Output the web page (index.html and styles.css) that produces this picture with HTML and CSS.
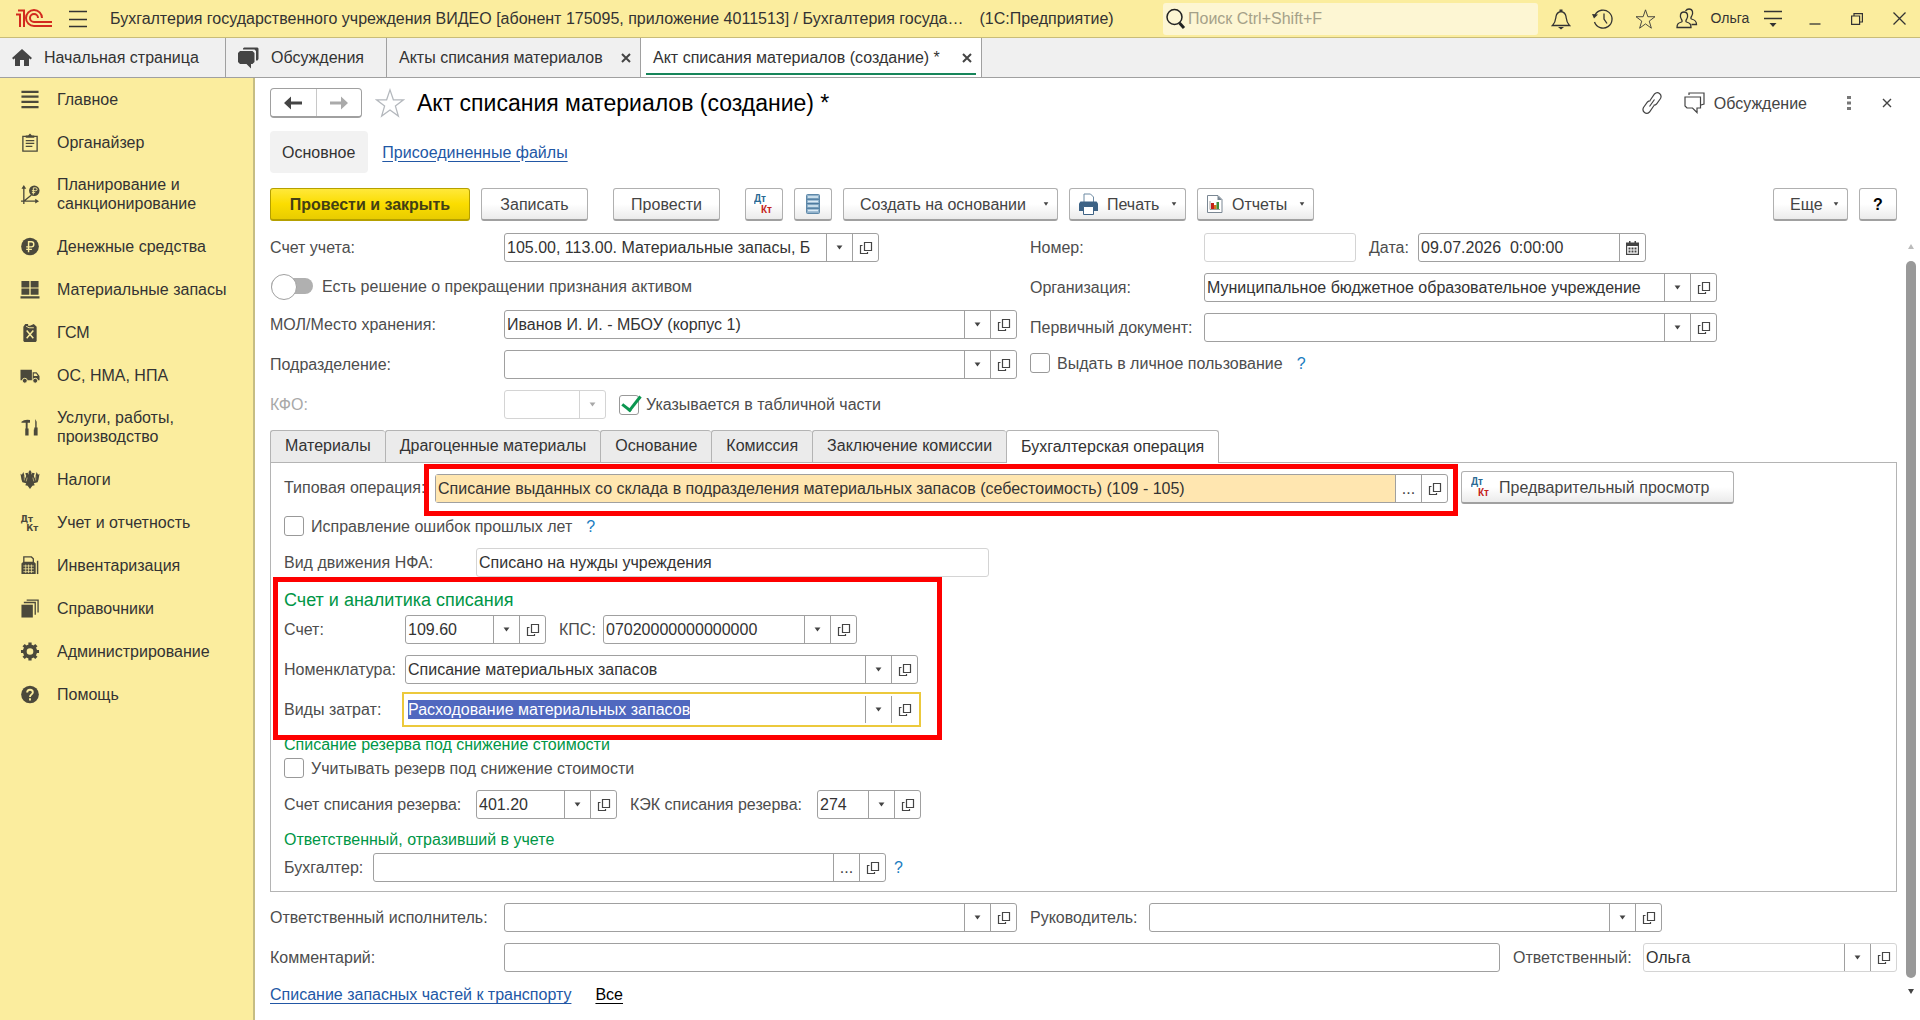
FILE: index.html
```html
<!DOCTYPE html>
<html lang="ru">
<head>
    <meta charset="UTF-8">
    <meta name="viewport" content="width=device-width, initial-scale=1.0">
    <title>Акт списания материалов (создание) *</title>
    <link rel="stylesheet" href="styles.css">
</head>
<body>
    <!-- Общие значки -->
    <svg class="sprite" aria-hidden="true">
        <symbol id="i-down" viewBox="0 0 8 6"><path d="M0.5 0.5h7L4 5.5z" fill="currentColor"/></symbol>
        <symbol id="i-open" viewBox="0 0 14 14"><path d="M5.5 1.5h7v8h-7zM3.500 4.500h-2v8h7v-1.500" fill="none" stroke="currentColor" stroke-width="1.200"/></symbol>
        <symbol id="i-close" viewBox="0 0 10 10"><path d="M1 1l8 8M9 1l-8 8" stroke="currentColor" stroke-width="2" fill="none"/></symbol>
        <symbol id="i-star" viewBox="0 0 24 24"><path d="M12 1.500l2.700 7.900h8.100l-6.500 5 2.400 8.100-6.700-4.900-6.700 4.900 2.400-8.100-6.500-5h8.100z" fill="none" stroke="currentColor"/></symbol>
    </svg>

    <header class="titlebar">
        <svg class="logo" viewBox="0 0 38 20" aria-label="1С"><g fill="none" stroke="#d22a1e" stroke-width="2"><path d="M1 5.500h4V18M3 1.500h6V18"/><path d="M27 9a8 8 0 1 0-8 8h18M23 9a4 4 0 1 0-4 4h18"/></g></svg>
        <button class="burger" aria-label="Меню"><svg width="18" height="18" viewBox="0 0 18 18"><path d="M0 1.500h18M0 9.500h18M0 16.500h18" stroke="currentColor" stroke-width="1.300"/></svg></button>
        <div class="app-title">
            <span>Бухгалтерия государственного учреждения ВИДЕО [абонент 175095, приложение 4011513] / Бухгалтерия госуда…</span>
            <span>(1С:Предприятие)</span>
        </div>
        <div class="search">
            <svg width="20" height="22" viewBox="0 0 20 22"><circle cx="8.500" cy="9" r="7.500" fill="none" stroke="#222" stroke-width="1.500"/><path d="M13.500 15l4.500 5" stroke="#222" stroke-width="3"/></svg>
            <input type="search" placeholder="Поиск Ctrl+Shift+F" aria-label="Поиск">
        </div>
        <button class="tool" aria-label="Уведомления"><svg width="20" height="22" viewBox="0 0 20 22"><path d="M1.500 17.500c3-3 3-5 3.500-9 .5-3 2-4.500 5-5 3 .5 4.500 2 5 5 .5 4 .5 6 3.500 9z" fill="none" stroke="currentColor" stroke-width="1.300"/><path d="M8.500 3.500V1.500h3v2M7 19h6l-3 2.500z" fill="currentColor"/></svg></button>
        <button class="tool" aria-label="История"><svg width="22" height="22" viewBox="0 0 22 22"><path d="M3 7a9 9 0 1 1-.5 7M12 5.500V11l3 4.500" fill="none" stroke="currentColor" stroke-width="1.300"/><path d="M0 6l6 .5-4 4z" fill="currentColor"/></svg></button>
        <button class="tool" aria-label="Избранное"><svg width="21" height="22"><use href="#i-star"/></svg></button>
        <button class="tool" aria-label="Пользователи"><svg width="22" height="22" viewBox="0 0 22 22"><g fill="none" stroke="currentColor" stroke-width="1.300"><path d="M1 19.500c0-3.500 1-4.500 4.500-5.500.8-.5.8-1.500 0-2.500-2-3-1.500-7.500 2.500-7.500s4.500 4.500 2.500 7.500c-.8 1-.8 2 0 2.500 3.500 1 4.500 2 4.500 5.500z"/><path d="M9.500 3c1-1.500 2.500-2 3.500-2 4 0 4.500 4.500 2.500 7.500-.8 1-.8 2 0 2.500 3.500 1 5 2 5 5.500h-5"/></g></svg></button>
        <span class="user">Ольга</span>
        <button class="tool" aria-label="Настройки"><svg width="18" height="18" viewBox="0 0 18 18"><path d="M0 1.500h18M0 8.500h18" stroke="currentColor" stroke-width="1.300"/><path d="M5.500 13h7L9 17z" fill="currentColor"/></svg></button>
        <button class="tool" aria-label="Свернуть"><svg width="12" height="12" viewBox="0 0 12 12"><path d="M0.500 11h11" stroke="currentColor" stroke-width="1.300"/></svg></button>
        <button class="tool" aria-label="Развернуть"><svg width="12" height="12" viewBox="0 0 12 12"><path d="M.6 3h8v8.400h-8zM3 3V.6h8.400V9H9" fill="none" stroke="currentColor" stroke-width="1.200"/></svg></button>
        <button class="tool" aria-label="Закрыть"><svg width="13" height="13" viewBox="0 0 13 13"><path d="M.5.5l12 12M12.500.5l-12 12" stroke="currentColor" stroke-width="1.300"/></svg></button>
    </header>

    <nav class="windows">
        <a class="window home" href="#"><svg width="20" height="18" viewBox="0 0 20 18"><path d="M10 0L0 9l1.500 1.500L3 9.300V17h5v-6h4v6h5V9.300l1.500 1.200L20 9z" fill="#444"/></svg>Начальная страница</a>
        <a class="window talks" href="#"><svg width="21" height="22" viewBox="0 0 21 22"><path d="M5 2.500V1.500l1-1h13.500l1 1V12l-1 1.500h-1.500V4l-1.500-1.500z" fill="#444"/><path d="M2 4h12.500l2 2v9l-2 2H13v4.500L8.500 17H2l-2-2V6z" fill="#444"/></svg>Обсуждения</a>
        <a class="window list" href="#">Акты списания материалов<svg class="x" width="10" height="10"><use href="#i-close"/></svg></a>
        <a class="window active" href="#">Акт списания материалов (создание) *<svg class="x" width="10" height="10"><use href="#i-close"/></svg></a>
    </nav>

    <div class="layout">
        <aside class="sidebar">
            <a href="#"><svg viewBox="0 0 20 20"><path d="M1 2h18M1 7h18M1 12.500h18M1 18h18" stroke="currentColor" stroke-width="2.400"/></svg>Главное</a>
            <a href="#"><svg viewBox="0 0 20 20"><path d="M2.500 3.500h15v15.500h-15z" fill="none" stroke="currentColor" stroke-width="1.400"/><path d="M5.500 5V2.500h2.500L10 .5l2 2h2.500V5z" fill="currentColor"/><path d="M5.500 8h9M5.500 11h9M5.500 14h7" stroke="currentColor" stroke-width="1.400"/></svg>Органайзер</a>
            <a href="#"><svg viewBox="0 0 20 20"><path d="M3.500 3v14h13M3.500 17l8-6.500M.5 17h3v3" fill="none" stroke="currentColor" stroke-width="1.400"/><path d="M3.500 0L6 4H1zM19.500 17l-4-2.500v5z" fill="currentColor"/><circle cx="14.500" cy="6" r="5.500" fill="currentColor"/><path d="M13.500 10V3h2.500q1.500 0 1.500 1.500T16 6h-4M12 8h3.500" fill="none" stroke="#fbed9e"/></svg>Планирование и санкционирование</a>
            <a href="#"><svg viewBox="0 0 20 20"><circle cx="10" cy="10" r="9.300" fill="currentColor"/><path d="M8.500 16V5h3q2.500 0 2.500 2.700t-2.500 2.700H6M6 13h6" fill="none" stroke="#fbed9e" stroke-width="1.500"/></svg>Денежные средства</a>
            <a href="#"><svg viewBox="0 0 20 20"><path d="M1 1h8.300v6.800H1zM10.700 1H19v6.800h-8.300zM1 9h8.300v6.500H1zM10.700 9H19v6.500h-8.300zM0 17h20v2.500H0z" fill="currentColor"/></svg>Материальные запасы</a>
            <a href="#"><svg viewBox="0 0 20 20"><path d="M3 4l2-3h3v2h2l4-2 3 3v15l-1 1H4l-1-1z" fill="currentColor"/><path d="M6.500 8l7 8M13.500 8l-7 8" stroke="#fbed9e" stroke-width="1.600"/><path d="M6 3.500l3 1.500h5" stroke="#fbed9e" fill="none"/></svg>ГСМ</a>
            <a href="#"><svg viewBox="0 0 20 20"><path d="M0 4h12v11H0zM12.800 6.500H17l3 4V15h-7.200z" fill="currentColor"/><path d="M14 8h2.500l1.700 2.500H14z" fill="#fbed9e"/><g fill="currentColor" stroke="#fbed9e"><circle cx="4.500" cy="15.500" r="2.600"/><circle cx="15.500" cy="15.500" r="2.600"/></g></svg>ОС, НМА, НПА</a>
            <a href="#"><svg viewBox="0 0 20 20"><path d="M1 4q3-3 9-2v3H7.500v6h-2V5H1zM5 11h3.500v7.500H5zM15.500 1l1.500 3v6h1v2h-3.500v-2h1V4zM14 12h4v6.500h-4z" fill="currentColor"/></svg>Услуги, работы, производство</a>
            <a href="#"><svg viewBox="0 0 20 20"><path d="M10 0l1.500 2v3l1-2 2.500.5-1 2.500 1 3L17 2l1.500 3L20 4l-1 6-1 3-4 1 1 2-2.500.5L10 20l-2.500-3.500L5 16l1-2-4-1-1-3-1-6 1.500 1L3 2l2 7 1-3-1-2.500L7.500 3l1 2V2z" fill="currentColor"/><path d="M4 6v5M16 6v5M7 8l-1 4M13 8l1 4" stroke="#fbed9e" stroke-width=".6"/></svg>Налоги</a>
            <a href="#"><svg viewBox="0 0 20 20" class="glyph"><text x="0" y="9" font-size="9">Дт</text><text x="6" y="19" font-size="9">Кт</text></svg>Учет и отчетность</a>
            <a href="#"><svg viewBox="0 0 20 20"><path d="M3.500 8V1h8l2 2v5" fill="none" stroke="currentColor" stroke-width="1.400"/><path d="M1 8l2-2h11l2 2v11H1z" fill="currentColor"/><path d="M3 10.500h11M3 13.500h11M3 16.500h11M5.500 9v9M8.500 9v9M11.500 9v9" stroke="#fbed9e" stroke-width=".8"/><path d="M18 5v14" stroke="currentColor" stroke-width="1.500"/></svg>Инвентаризация</a>
            <a href="#"><svg viewBox="0 0 20 20"><path d="M1 6h12v13.500H1z" fill="currentColor"/><path d="M3.500 3.700h12v13M6.500 1.200h12v13" fill="none" stroke="currentColor" stroke-width="1.400"/></svg>Справочники</a>
            <a href="#"><svg viewBox="0 0 20 20"><circle cx="10" cy="10" r="5.500" fill="none" stroke="currentColor" stroke-width="4"/><path d="M10 .5v3M10 16.500v3M.5 10h3M16.500 10h3M3.300 3.300l2.200 2.200M14.500 14.500l2.200 2.200M3.300 16.700l2.200-2.200M14.500 5.500l2.200-2.200" stroke="currentColor" stroke-width="3.400"/></svg>Администрирование</a>
            <a href="#"><svg viewBox="0 0 20 20"><circle cx="10" cy="10" r="9.300" fill="currentColor"/><path d="M7 8q0-3 3-3t3 2.700q0 1.300-1.500 2.300T10 12.500M10 14v2.200" fill="none" stroke="#fbed9e" stroke-width="2"/></svg>Помощь</a>
        </aside>

        <main class="page">
            <div class="page-head">
                <div class="history">
                    <button aria-label="Назад"><svg width="18" height="14" viewBox="0 0 18 14"><path d="M0 7l7-6.500V5.500h11v3H7v5z" fill="#444"/></svg></button>
                    <button aria-label="Вперед"><svg width="18" height="14" viewBox="0 0 18 14"><path d="M18 7l-7-6.500V5.500H0v3h11v5z" fill="#aaa"/></svg></button>
                </div>
                <svg class="favorite" width="30" height="30"><use href="#i-star"/></svg>
                <h1>Акт списания материалов (создание) *</h1>
                <button class="plain link-btn" aria-label="Ссылка"><svg width="20" height="24" viewBox="0 0 20 24"><path d="M8 9.500l4.500-6.500q2.500-2.500 5-.5t1 5L14.500 13q-1.500 1.500-3 1M12 14.500L7.500 21q-2.500 2.500-5 .5t-1-5L5.500 11q1.500-1.500 3-1M7.500 15.500l5-7" fill="none" stroke="currentColor" stroke-width="1.200"/></svg></button>
                <button class="plain talk-btn"><svg width="21" height="22" viewBox="0 0 21 22"><path d="M5 3V1h15v11l-3 1M1 5h15.500v11H13v4.500L8.500 16H3l-2-2z" fill="none" stroke="currentColor" stroke-width="1.200"/></svg>Обсуждение</button>
                <button class="plain dots" aria-label="Еще"><svg width="4" height="16" viewBox="0 0 4 16"><path d="M0 1h4v3H0zM0 6.500h4v3H0zM0 12h4v3H0z" fill="#777"/></svg></button>
                <button class="plain" aria-label="Закрыть"><svg width="10" height="10" viewBox="0 0 10 10"><path d="M1 1l8 8M9 1l-8 8" stroke="currentColor" stroke-width="1.400"/></svg></button>
            </div>

            <nav class="sections">
                <span class="current">Основное</span>
                <a href="#">Присоединенные файлы</a>
            </nav>

            <div class="commands">
                <button class="btn primary">Провести и закрыть</button>
                <button class="btn">Записать</button>
                <button class="btn spaced">Провести</button>
                <button class="btn icon spaced" aria-label="Проводки"><svg class="dtkt" width="20" height="22" viewBox="0 0 20 22"><text x="0" y="9">Дт</text><text class="kt" x="7" y="20">Кт</text></svg></button>
                <button class="btn icon" aria-label="Реестр"><svg width="14" height="20" viewBox="0 0 14 20"><rect x=".5" y=".5" width="13" height="19" rx="1" fill="#8fb1cb" stroke="#5e88a8"/><path d="M2 3h10M2 7.500h10M2 12h10M2 16.500h10" stroke="#dcebf5" stroke-width="1.500"/><path d="M1 5.200h12M1 9.700h12M1 14.200h12" stroke="#3f6f95"/></svg></button>
                <button class="btn menu create">Создать на основании<svg class="caret"><use href="#i-down"/></svg></button>
                <button class="btn menu with-icon"><svg width="19" height="22" viewBox="0 0 19 22"><path d="M5 9V1h6.500l3 3v5" fill="#fff" stroke="#6d8aa3"/><path d="M1.500 8.500h16l1.500 2V18H0v-7.500z" fill="#3d6285"/><path d="M4.500 13.500h10v8h-10z" fill="#fff" stroke="#3d6285"/></svg>Печать<svg class="caret"><use href="#i-down"/></svg></button>
                <button class="btn menu with-icon"><svg width="16" height="18" viewBox="0 0 16 18"><path d="M.5.5h10.500l4 4v13H.5z" fill="#fff" stroke="#7a8793"/><path d="M10.500.5v4.500h4.500z" fill="#7a8793"/><path d="M3 6v8.500h10" fill="none" stroke="#777" stroke-width=".7"/><path d="M4 8h3v6H4z" fill="#c4231a"/><path d="M7 10h2.500v4H7z" fill="#d67a1f"/><path d="M9.500 7H12v7H9.500z" fill="#3d8f3d"/></svg>Отчеты<svg class="caret"><use href="#i-down"/></svg></button>
                <button class="btn menu more">Еще<svg class="caret"><use href="#i-down"/></svg></button>
                <button class="btn icon help-btn">?</button>
            </div>

            <div class="work">
                <form class="form" onsubmit="return false">
                    <div class="columns">
                        <div class="col">
                            <div class="row">
                                <label class="lbl main" for="account">Счет учета:</label>
                                <div class="field w-account"><input id="account" type="text" value="105.00, 113.00. Материальные запасы, Б"><button aria-label="Выбрать"><svg class="arrow"><use href="#i-down"/></svg></button><button aria-label="Открыть"><svg class="open"><use href="#i-open"/></svg></button></div>
                            </div>
                            <label class="toggle"><input type="checkbox">Есть решение о прекращении признания активом</label>
                            <div class="row">
                                <label class="lbl main" for="mol">МОЛ/Место хранения:</label>
                                <div class="field wide"><input id="mol" type="text" value="Иванов И. И. - МБОУ (корпус 1)"><button aria-label="Выбрать"><svg class="arrow"><use href="#i-down"/></svg></button><button aria-label="Открыть"><svg class="open"><use href="#i-open"/></svg></button></div>
                            </div>
                            <div class="row">
                                <label class="lbl main" for="dept">Подразделение:</label>
                                <div class="field wide"><input id="dept" type="text"><button aria-label="Выбрать"><svg class="arrow"><use href="#i-down"/></svg></button><button aria-label="Открыть"><svg class="open"><use href="#i-open"/></svg></button></div>
                            </div>
                            <div class="row">
                                <label class="lbl main disabled" for="kfo">КФО:</label>
                                <div class="field w-kfo disabled"><input id="kfo" type="text" disabled><button aria-label="Выбрать" disabled><svg class="arrow"><use href="#i-down"/></svg></button></div>
                                <label class="check next"><input type="checkbox" checked>Указывается в табличной части</label>
                            </div>
                        </div>
                        <div class="col">
                            <div class="row">
                                <label class="lbl side" for="number">Номер:</label>
                                <div class="field w-number readonly"><input id="number" type="text"></div>
                                <label class="lbl next l-date" for="date">Дата:</label>
                                <div class="field w-date"><input id="date" type="text" value="09.07.2026  0:00:00"><button aria-label="Календарь"><svg width="13" height="14" viewBox="0 0 13 14"><path d="M.6 2h11.800v11.400H.6z" fill="none" stroke="currentColor" stroke-width="1.200"/><path d="M0 2h13v3H0zM3 0h1.500v2H3zM8.500 0H10v2H8.500zM2.500 6.500h2v2h-2zM5.500 6.500h2v2h-2zM8.500 6.500h2v2h-2zM2.500 9.500h2v2h-2zM5.500 9.500h2v2h-2zM8.500 9.500h2v2h-2z" fill="currentColor"/></svg></button></div>
                            </div>
                            <div class="row">
                                <label class="lbl side" for="org">Организация:</label>
                                <div class="field wide"><input id="org" type="text" value="Муниципальное бюджетное образовательное учреждение"><button aria-label="Выбрать"><svg class="arrow"><use href="#i-down"/></svg></button><button aria-label="Открыть"><svg class="open"><use href="#i-open"/></svg></button></div>
                            </div>
                            <div class="row">
                                <label class="lbl side" for="source">Первичный документ:</label>
                                <div class="field wide"><input id="source" type="text"><button aria-label="Выбрать"><svg class="arrow"><use href="#i-down"/></svg></button><button aria-label="Открыть"><svg class="open"><use href="#i-open"/></svg></button></div>
                            </div>
                            <div class="check-row"><label class="check"><input type="checkbox">Выдать в личное пользование</label><a class="hint" href="#">?</a></div>
                        </div>
                    </div>

                    <div class="tabs" role="tablist">
                        <button role="tab">Материалы</button>
                        <button role="tab">Драгоценные материалы</button>
                        <button role="tab">Основание</button>
                        <button role="tab">Комиссия</button>
                        <button role="tab">Заключение комиссии</button>
                        <button role="tab" class="active" aria-selected="true">Бухгалтерская операция</button>
                    </div>

                    <div class="panel">
                        <div class="row operation">
                            <label class="lbl l-operation" for="operation">Типовая операция:</label>
                            <div class="mark mark-operation">
                                <div class="field w-operation"><input id="operation" type="text" value="Списание выданных со склада в подразделения материальных запасов (себестоимость) (109 - 105)"><button aria-label="Выбрать">...</button><button aria-label="Открыть"><svg class="open"><use href="#i-open"/></svg></button></div>
                            </div>
                            <button class="btn preview"><svg class="dtkt" width="20" height="22" viewBox="0 0 20 22"><text x="0" y="9">Дт</text><text class="kt" x="7" y="20">Кт</text></svg>Предварительный просмотр</button>
                        </div>
                        <div class="check-row gap"><label class="check"><input type="checkbox">Исправление ошибок прошлых лет</label><a class="hint" href="#">?</a></div>
                        <div class="row gap">
                            <label class="lbl reserve" for="movement">Вид движения НФА:</label>
                            <div class="field wide readonly"><input id="movement" type="text" value="Списано на нужды учреждения" readonly></div>
                        </div>

                        <div class="mark mark-analytics">
                            <h2>Счет и аналитика списания</h2>
                            <div class="row">
                                <label class="lbl analytics" for="acc">Счет:</label>
                                <div class="field w-acc"><input id="acc" type="text" value="109.60"><button aria-label="Выбрать"><svg class="arrow"><use href="#i-down"/></svg></button><button aria-label="Открыть"><svg class="open"><use href="#i-open"/></svg></button></div>
                                <label class="lbl next l-kps" for="kps">КПС:</label>
                                <div class="field w-kps"><input id="kps" type="text" value="07020000000000000"><button aria-label="Выбрать"><svg class="arrow"><use href="#i-down"/></svg></button><button aria-label="Открыть"><svg class="open"><use href="#i-open"/></svg></button></div>
                            </div>
                            <div class="row">
                                <label class="lbl analytics" for="item">Номенклатура:</label>
                                <div class="field wide"><input id="item" type="text" value="Списание материальных запасов"><button aria-label="Выбрать"><svg class="arrow"><use href="#i-down"/></svg></button><button aria-label="Открыть"><svg class="open"><use href="#i-open"/></svg></button></div>
                            </div>
                            <div class="row">
                                <label class="lbl analytics" for="costs">Виды затрат:</label>
                                <div class="field wide"><input id="costs" type="text" value="Расходование материальных запасов"><button aria-label="Выбрать"><svg class="arrow"><use href="#i-down"/></svg></button><button aria-label="Открыть"><svg class="open"><use href="#i-open"/></svg></button></div>
                            </div>
                        </div>

                        <h3>Списание резерва под снижение стоимости</h3>
                        <div class="check-row"><label class="check"><input type="checkbox">Учитывать резерв под снижение стоимости</label></div>
                        <div class="row gap">
                            <label class="lbl reserve" for="racc">Счет списания резерва:</label>
                            <div class="field w-acc"><input id="racc" type="text" value="401.20"><button aria-label="Выбрать"><svg class="arrow"><use href="#i-down"/></svg></button><button aria-label="Открыть"><svg class="open"><use href="#i-open"/></svg></button></div>
                            <label class="lbl next l-kek" for="kek">КЭК списания резерва:</label>
                            <div class="field w-kek"><input id="kek" type="text" value="274"><button aria-label="Выбрать"><svg class="arrow"><use href="#i-down"/></svg></button><button aria-label="Открыть"><svg class="open"><use href="#i-open"/></svg></button></div>
                        </div>
                        <h3>Ответственный, отразивший в учете</h3>
                        <div class="row">
                            <label class="lbl l-clerk" for="clerk">Бухгалтер:</label>
                            <div class="field wide"><input id="clerk" type="text"><button aria-label="Выбрать">...</button><button aria-label="Открыть"><svg class="open"><use href="#i-open"/></svg></button></div>
                            <a class="hint" href="#">?</a>
                        </div>
                    </div>

                    <div class="row bottom">
                        <label class="lbl main" for="executor">Ответственный исполнитель:</label>
                        <div class="field wide"><input id="executor" type="text"><button aria-label="Выбрать"><svg class="arrow"><use href="#i-down"/></svg></button><button aria-label="Открыть"><svg class="open"><use href="#i-open"/></svg></button></div>
                        <label class="lbl next l-head" for="head">Руководитель:</label>
                        <div class="field wide"><input id="head" type="text"><button aria-label="Выбрать"><svg class="arrow"><use href="#i-down"/></svg></button><button aria-label="Открыть"><svg class="open"><use href="#i-open"/></svg></button></div>
                    </div>
                    <div class="row bottom">
                        <label class="lbl main" for="comment">Комментарий:</label>
                        <div class="field grow"><input id="comment" type="text"></div>
                        <label class="lbl next l-owner" for="owner">Ответственный:</label>
                        <div class="field w-owner readonly"><input id="owner" type="text" value="Ольга"><button aria-label="Выбрать"><svg class="arrow"><use href="#i-down"/></svg></button><button aria-label="Открыть"><svg class="open"><use href="#i-open"/></svg></button></div>
                    </div>
                    <div class="links">
                        <a href="#">Списание запасных частей к транспорту</a>
                        <a class="all" href="#">Все</a>
                    </div>
                </form>
                <div class="scroll" aria-hidden="true">
                    <svg width="6" height="6" viewBox="0 0 6 6"><path d="M3 0l3 5H0z" fill="#bbb"/></svg>
                    <div class="thumb"></div>
                    <svg width="6" height="6" viewBox="0 0 6 6"><path d="M0 0h6L3 5z" fill="#444"/></svg>
                </div>
            </div>
        </main>
    </div>

    <script>
        // фокус на поле "Виды затрат"
        const costs = document.getElementById('costs');
        costs.focus({ preventScroll: true });
        costs.select();
    </script>
</body>
</html>
```

FILE: styles.css
```css
* {
    box-sizing: border-box;
}

body {
    margin: 0;
    min-height: 100vh;
    display: flex;
    flex-direction: column;
    font-family: "Liberation Sans", Arial, sans-serif;
    font-size: 16px;
    line-height: 19px;
    color: #333;
    background-color: #fff;
}

button, input {
    font: inherit;
    color: inherit;
}

button {
    cursor: pointer;
}

svg {
    flex: none;
}

.sprite {
    position: absolute;
    width: 0;
    height: 0;
}

/* Заголовок окна */
.titlebar {
    display: flex;
    align-items: center;
    height: 38px;
    padding-left: 15px;
    background-color: #fbed9e;
    border-bottom: 1px solid #c9bc78;
}

.logo {
    width: 38px;
    height: 20px;
}

.burger {
    display: flex;
    margin: 0 23px 0 16px;
    padding: 0;
    border: none;
    background: none;
}

.app-title {
    flex: 1;
    display: flex;
    gap: 16px;
    white-space: nowrap;
    overflow: hidden;
}

.search {
    display: flex;
    align-items: center;
    width: 375px;
    height: 32px;
    padding-left: 3px;
    margin-right: 2px;
    border-radius: 3px;
    background-color: #fdf6d3;
}

.search input {
    flex: 1;
    border: none;
    padding: 0 0 0 2px;
    outline: none;
    background: none;
}

.search input::placeholder {
    color: #a5a189;
}

.tool {
    display: flex;
    align-items: center;
    justify-content: center;
    width: 42px;
    height: 36px;
    padding: 0;
    border: none;
    background: none;
}

.user {
    width: 44px;
    text-align: center;
    font-size: 14px;
}

/* Открытые окна */
.windows {
    display: flex;
    height: 40px;
    background-color: #f0f0f0;
    border-bottom: 1px solid #a0a0a0;
}

.window {
    display: flex;
    align-items: center;
    padding: 0 9px 0 12px;
    border-right: 1px solid #a0a0a0;
    color: #333;
    text-decoration: none;
    white-space: nowrap;
}

.window svg {
    margin-right: 12px;
}

.window .x {
    margin: 0 0 0 auto;
    color: #444;
}

.home {
    min-width: 226px;
}

.talks {
    min-width: 161px;
}

.list {
    min-width: 254px;
}

.active.window {
    min-width: 341px;
    background: #fff linear-gradient(#17855a, #17855a) no-repeat 5px 35px / calc(100% - 10px) 2px;
}

/* Разделы */
.layout {
    flex: 1;
    display: flex;
}

.sidebar {
    flex: none;
    width: 255px;
    background-color: #fbed9e;
    border-right: 2px solid #c6bd83;
}

.sidebar a {
    display: flex;
    align-items: center;
    gap: 17px;
    min-height: 43px;
    padding: 11px 10px 12px 20px;
    color: #333;
    text-decoration: none;
}

.sidebar svg {
    width: 20px;
    height: 19px;
    color: #4b493b;
}

.glyph {
    font-family: "DejaVu Sans", Verdana, sans-serif;
    font-weight: bold;
    fill: currentColor;
}

.dtkt {
    font-size: 10px;
    font-weight: bold;
    fill: #2a6a94;
}

.kt {
    fill: #c4231a;
}

/* Страница */
.page {
    flex: 1;
    min-width: 0;
    padding: 10px 0 0 15px;
}

.page-head, .sections, .commands {
    display: flex;
    align-items: center;
    margin-right: 23px;
}

.page-head {
    height: 30px;
}

.history {
    display: flex;
    width: 92px;
    height: 30px;
    border: 1px solid #a0a0a0;
    border-bottom-width: 2px;
    border-radius: 4px;
}

.history button {
    flex: 1;
    display: flex;
    align-items: center;
    justify-content: center;
    padding: 0;
    border: none;
    background: none;
}

.history button + button {
    border-left: 1px solid #c8c8c8;
}

.favorite {
    margin: 0 12px 0 13px;
    color: #b4b8bd;
}

h1 {
    flex: 1;
    margin: 0;
    font-size: 23px;
    line-height: 24px;
    font-weight: normal;
    color: #000;
}

.plain {
    display: flex;
    align-items: center;
    gap: 9px;
    padding: 0;
    border: none;
    background: none;
    color: #444;
}

.talk-btn {
    margin: 0 40px 0 22px;
}

.dots {
    margin-right: 31px;
}

.page-head .plain:last-child {
    margin-right: 5px;
}

.sections {
    gap: 14px;
    height: 42px;
    margin-top: 13px;
}

.current {
    padding: 12px 13px 11px 12px;
    border-radius: 4px;
    background-color: #f2f2f2;
}

.sections a, .links a {
    color: #2257a5;
    text-underline-offset: 3px;
}

.commands {
    gap: 11px;
    margin-top: 15px;
    margin-bottom: 12px;
}

.btn {
    display: flex;
    align-items: center;
    justify-content: center;
    min-width: 107px;
    height: 33px;
    padding: 0 16px;
    border: 1px solid #b0b0b0;
    border-bottom: 2px solid #a0a0a0;
    border-radius: 3px;
    background: linear-gradient(#fff 50%, #ebebeb);
    color: #444;
    white-space: nowrap;
}

.primary {
    min-width: 200px;
    border-color: #b5a000;
    background: linear-gradient(#ffe83a, #fbdd00 50%, #e8cc00);
    font-weight: bold;
    color: #433f14;
}

.spaced {
    margin-left: 14px;
}

.icon {
    min-width: 38px;
    padding: 0;
}

.menu {
    justify-content: flex-start;
    min-width: 75px;
    gap: 9px;
    padding-right: 8px;
}

.create {
    min-width: 215px;
}

.with-icon {
    min-width: 117px;
    padding-left: 9px;
}

.caret {
    width: 6px;
    height: 4px;
    margin-left: auto;
}

.more {
    margin-left: auto;
}

.help-btn {
    font-weight: bold;
    color: #000;
}

/* Форма */
.work {
    display: flex;
}

.form {
    flex: 1;
    min-width: 0;
}

.columns {
    display: flex;
    gap: 13px;
}

.row {
    display: flex;
    align-items: center;
}

.columns .row, .columns .toggle {
    margin-bottom: 11px;
}

.lbl {
    flex: none;
    padding-right: 5px;
    color: #4d4d4d;
    white-space: nowrap;
}

.lbl.disabled {
    color: #a8a8a8;
}

.main {
    width: 234px;
}

.side {
    width: 174px;
}

.reserve {
    width: 192px;
}

.analytics {
    width: 121px;
}

.l-operation {
    width: 151px;
}

.l-date {
    width: 49px;
}

.l-kps {
    width: 44px;
}

.l-kek {
    width: 187px;
}

.l-clerk {
    width: 89px;
}

.l-head {
    width: 119px;
}

.l-owner {
    width: 130px;
}

.next {
    margin-left: 13px;
}

.field {
    flex: none;
    display: flex;
    height: 29px;
    border: 1px solid #a0a0a0;
    border-radius: 3px;
    background-color: #fff;
}

.field input {
    flex: 1;
    min-width: 0;
    padding: 0 0 0 2px;
    border: none;
    outline: none;
    background: none;
}

.field input::selection {
    color: #fff;
    background-color: #5068bf;
}

.field button {
    display: flex;
    align-items: center;
    justify-content: center;
    width: 26px;
    padding: 0;
    border: none;
    border-left: 1px solid #a0a0a0;
    background: none;
    color: #444;
}

.arrow {
    width: 7px;
    height: 5px;
}

.open {
    width: 14px;
    height: 14px;
}

.field.readonly, .field.disabled, .field.disabled button {
    border-color: #d4d4d4;
}

.field.disabled button {
    color: #a8a8a8;
}

.field:focus-within {
    border-color: #fff;
    outline: 2px solid #ecc93c;
    outline-offset: 1px;
    border-radius: 0;
}

.wide {
    width: 513px;
}

.grow {
    flex: 1;
}

.w-account {
    width: 375px;
}

.w-kfo {
    width: 102px;
}

.w-number {
    width: 152px;
}

.w-date {
    width: 228px;
}

.w-operation {
    width: 1013px;
}

.w-operation input {
    background-color: #ffe6b0;
}

.w-acc {
    width: 141px;
}

.w-kps {
    width: 254px;
}

.w-kek {
    width: 104px;
}

.w-owner {
    width: 254px;
}

.check, .toggle, .check-row {
    display: flex;
    align-items: center;
    color: #4d4d4d;
}

.check-row {
    height: 20px;
}

.check input {
    appearance: none;
    width: 20px;
    height: 20px;
    margin: 0 7px 0 0;
    border: 1px solid #999;
    border-radius: 3px;
    background-color: #fff;
    position: relative;
}

.check input:checked::after {
    content: "";
    position: absolute;
    left: 6px;
    top: -4px;
    width: 8px;
    height: 16px;
    border: solid #0b9650;
    border-width: 0 3px 3px 0;
    transform: rotate(38deg);
}

.toggle {
    height: 26px;
}

/* переключатель: дорожка и круглая ручка */
.toggle input {
    appearance: none;
    width: 42px;
    height: 16px;
    margin: 0 9px 0 1px;
    border-radius: 8px;
    background-color: #b0b0b0;
    position: relative;
}

.toggle input::before {
    content: "";
    position: absolute;
    left: 0;
    top: -4px;
    width: 24px;
    height: 24px;
    border: 1px solid #a0a0a0;
    border-radius: 50%;
    background-color: #fff;
}

.hint {
    margin-left: 8px;
    color: #1a7cc0;
    text-decoration: none;
}

.check + .hint {
    margin-left: 14px;
}

/* Закладки */
.tabs {
    display: flex;
}

.tabs button {
    height: 32px;
    padding: 0 14px 2px;
    border: 1px solid #b4b4b4;
    border-bottom: none;
    border-right: none;
    border-radius: 3px 3px 0 0;
    background-color: #ebebeb;
}

.tabs .active {
    height: 33px;
    margin-bottom: -1px;
    border-right: 1px solid #b4b4b4;
    background-color: #fff;
    position: relative;
}

.panel {
    padding: 8px 13px 9px;
    border: 1px solid #b4b4b4;
}

.panel .gap {
    margin-top: 12px;
}

.preview {
    justify-content: flex-start;
    min-width: 273px;
    margin-left: 13px;
    padding: 0 16px 0 9px;
    gap: 8px;
}

h2, h3 {
    margin: 0;
    font-weight: normal;
    color: #009646;
}

h2 {
    margin-bottom: 3px;
    font-size: 18px;
    line-height: 24px;
}

h3 {
    margin: 11px 0 4px;
    font-size: 16px;
    line-height: 19px;
}

/* Красные рамки поверх формы */
.mark {
    position: relative;
}

.mark::after {
    content: "";
    position: absolute;
    border: 5px solid #fe0000;
    pointer-events: none;
}

.mark-operation {
    padding-top: 2px;
}

.mark-operation::after {
    inset: -8px -10px -13px -11px;
}

.mark-analytics {
    width: fit-content;
    margin-top: 11px;
}

.mark-analytics::after {
    inset: -11px -24px -16px -11px;
}

.mark-analytics .row + .row {
    margin-top: 11px;
}

.bottom {
    margin-top: 11px;
}

.links {
    display: flex;
    gap: 24px;
    margin-top: 13px;
}

.links .all {
    color: #000;
}

/* Полоса прокрутки */
.scroll {
    flex: none;
    display: flex;
    flex-direction: column;
    align-items: center;
    gap: 11px;
    width: 23px;
    padding: 11px 0 9px 4px;
}

.thumb {
    flex: 1;
    width: 10px;
    border-radius: 5px;
    background-color: #999;
}
```
